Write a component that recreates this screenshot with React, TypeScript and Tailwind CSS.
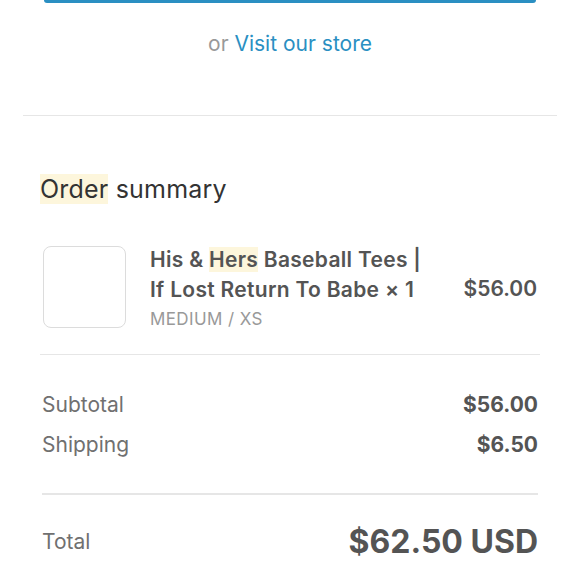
export default function App() {
  return (
    <div className="w-[580px] h-[580px] overflow-hidden bg-white text-[#545454]" style={{ fontFamily: 'Inter, "Liberation Sans", sans-serif' }}>
      <div className="mx-[44px] h-[3px] rounded-b-[3px] bg-[#2a8fc2]"></div>

      <p className="mt-[27px] text-center text-[21px] leading-[28px]">
        <span className="text-[#999999]">or </span>
        <span className="text-[#2a8fc2]">Visit our store</span>
      </p>

      <div className="mx-[23px] mt-[57px] h-px bg-[#e6e6e6]"></div>

      <div className="px-[40px]">
        <h2 className="mt-[58px] text-[25px] leading-[30px] tracking-[0.2px] text-[#333333]">
          <span className="bg-[#fdf6dc]">Order</span> summary
        </h2>

        <div className="mt-[42px] flex items-start pb-[24px] border-b border-[#e6e6e6]">
          <div className="w-[83px] h-[82px] shrink-0 rounded-[8px] border border-[#dcdcdc] ml-[3px]"></div>
          <div className="ml-[24px] flex-1 -mt-[1px]">
            <p className="text-[21px] leading-[30px] tracking-[0.3px] font-semibold text-[#545454]">
              His &amp; <span className="bg-[#fdf6dc]">Hers</span> Baseball Tees |
              <br />
              If Lost Return To Babe × 1
            </p>
            <p className="mt-[3px] text-[17px] leading-[22px] text-[#999999] tracking-[0.4px]">MEDIUM / XS</p>
          </div>
          <p className="mt-[29px] text-[21px] leading-[28px] font-semibold text-[#545454] mr-[3px]">$56.00</p>
        </div>

        <div className="pt-[36px] pb-[34px] border-b-2 border-[#e6e6e6] mx-[2px] space-y-[12px]">
          <div className="flex items-center justify-between">
            <span className="text-[21px] leading-[28px] text-[#707070]">Subtotal</span>
            <span className="text-[21px] leading-[28px] font-bold text-[#545454]">$56.00</span>
          </div>
          <div className="flex items-center justify-between">
            <span className="text-[21px] leading-[28px] text-[#707070]">Shipping</span>
            <span className="text-[21px] leading-[28px] font-bold text-[#545454]">$6.50</span>
          </div>
        </div>

        <div className="mt-[27px] mx-[2px] flex items-center justify-between">
          <span className="text-[21px] leading-[28px] text-[#707070]">Total</span>
          <span className="text-[32px] leading-[40px] font-bold text-[#545454]">$62.50 USD</span>
        </div>
      </div>
    </div>
  );
}
